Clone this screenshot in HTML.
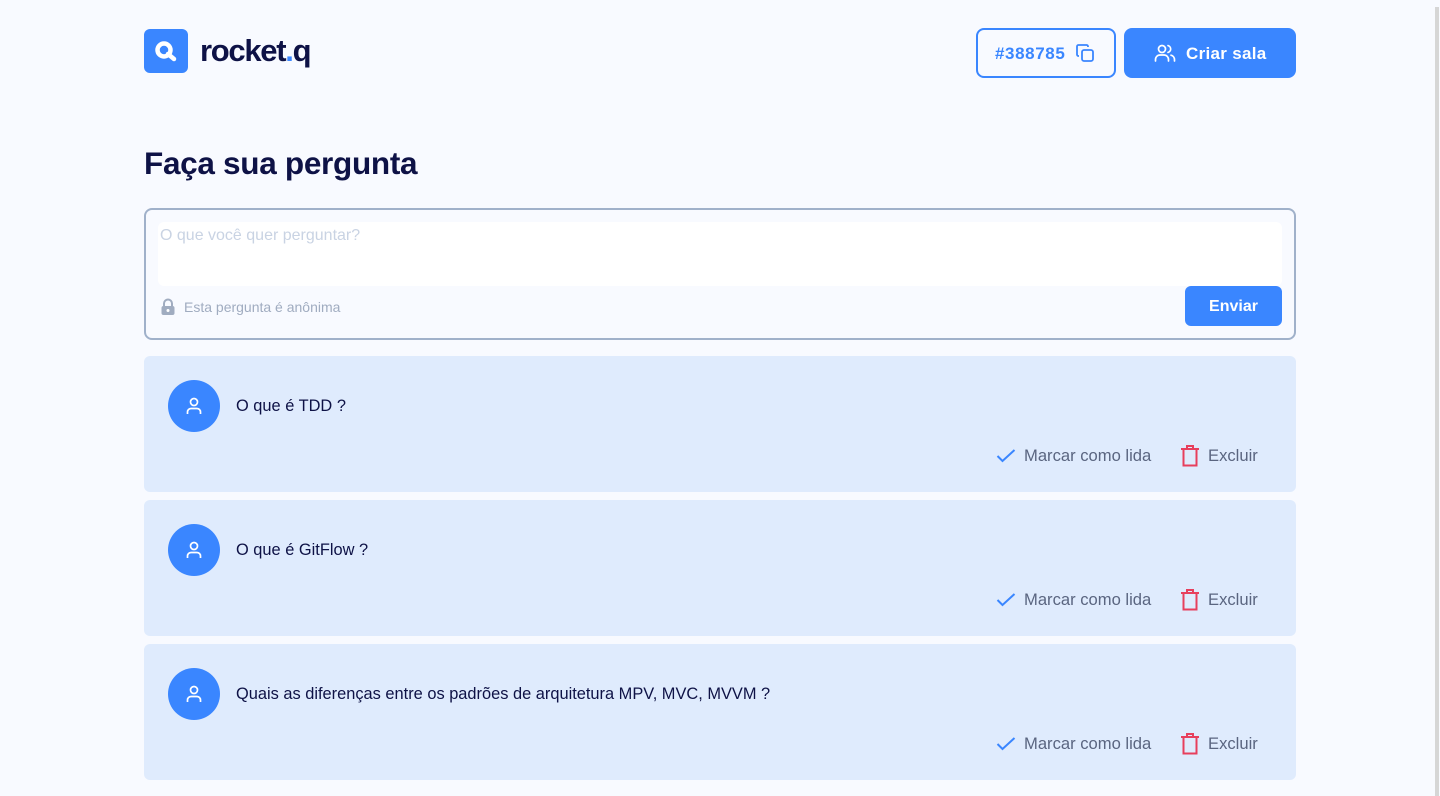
<!DOCTYPE html>
<html><head><meta charset="utf-8"><style>
*{box-sizing:border-box;margin:0;padding:0}
body{width:1440px;height:796px;overflow:hidden;background:#F8FAFF;font-family:"Liberation Sans",sans-serif;position:relative}
.sb{position:absolute;left:1435px;top:7px;width:4px;height:789px;background:#d6d6d6}
.logo{position:absolute;left:144px;top:29px;width:44px;height:44px;border-radius:6px;background:#3A86FF}
.brand{position:absolute;left:200px;top:33px;font-size:31px;font-weight:bold;color:#0E1246;letter-spacing:-1.3px}
.brand span{color:#3A86FF}
.code{position:absolute;left:976px;top:28px;width:140px;height:50px;border:2px solid #3A86FF;border-radius:8px;color:#3A86FF;font-size:17px;font-weight:bold;letter-spacing:0.6px;display:flex;align-items:center;padding-left:17px;padding-top:2px}
.criar{position:absolute;left:1124px;top:28px;width:172px;height:50px;border-radius:8px;background:#3A86FF;color:#fff;font-size:17px;font-weight:bold;letter-spacing:0.3px;display:flex;align-items:center;padding-left:30px;padding-top:2px}
h1{position:absolute;left:144px;top:145px;font-size:31.5px;color:#0E1246;letter-spacing:-0.3px}
.form{position:absolute;left:144px;top:208px;width:1152px;height:132px;border:2px solid #A0B1CA;border-radius:8px}
.ta{position:absolute;left:12px;top:12px;width:1124px;height:64px;background:#fff;border-radius:6px;color:#C9D3E3;font-size:16px;padding:5px 2px}
.anon{position:absolute;left:14px;top:88px;color:#A0ACC0;font-size:14px;display:flex;align-items:center;gap:8px}
.env{position:absolute;left:1039px;top:76px;width:97px;height:40px;background:#3A86FF;border-radius:6px;color:#fff;font-size:16px;font-weight:bold;text-align:center;line-height:42px}
.q{position:absolute;left:144px;width:1152px;height:136px;background:#DFEBFD;border-radius:6px}
.av{position:absolute;left:24px;top:24px;width:52px;height:52px;border-radius:50%;background:#3A86FF;display:flex;align-items:center;justify-content:center}
.qt{position:absolute;left:92px;top:41px;font-size:16.4px;color:#0E1246}
.act{position:absolute;top:90px;font-size:16.6px;color:#5A6580;display:flex;align-items:center;gap:8px}
.act svg{flex:none}
.m{left:852px}.x{left:1036px;top:88px}
</style></head><body>
<div class="sb"></div>
<div class="logo"><svg width="44" height="44" viewBox="0 0 44 44"><circle cx="20" cy="21" r="6.5" fill="none" stroke="#fff" stroke-width="4.5"/><path d="M24 25 L30 30" stroke="#fff" stroke-width="4.5" stroke-linecap="round"/></svg></div>
<div class="brand">rocket<span>.</span>q</div>
<div class="code">#388785<svg style="margin-left:10px;margin-top:-2px" width="20" height="20" viewBox="0 0 20 20" fill="none" stroke="#3A86FF" stroke-width="1.8"><rect x="7" y="7" width="11" height="11" rx="2"/><path d="M4 13H3.5A1.5 1.5 0 0 1 2 11.5V3.5A1.5 1.5 0 0 1 3.5 2h8A1.5 1.5 0 0 1 13 3.5V4"/></svg></div>
<div class="criar"><svg style="margin-top:-2px" width="22" height="20" viewBox="0 0 22 20" fill="none" stroke="#fff" stroke-width="1.7" stroke-linecap="round"><circle cx="8" cy="6" r="3.5"/><path d="M1.5 18v-1.5a4.5 4.5 0 0 1 4.5-4.5h4a4.5 4.5 0 0 1 4.5 4.5V18"/><path d="M14 2.6a3.5 3.5 0 0 1 0 6.8M17 12.2a4.5 4.5 0 0 1 3.5 4.3V18"/></svg><span style="margin-left:10px">Criar sala</span></div>
<h1>Faça sua pergunta</h1>
<div class="form"><div class="ta">O que você quer perguntar?</div>
<div class="anon"><svg width="16" height="18" viewBox="0 0 16 18"><path d="M4 8V5.5a4 4 0 0 1 8 0V8" fill="none" stroke="#A0ACC0" stroke-width="2"/><rect x="1.5" y="8" width="13" height="9" rx="2" fill="#A0ACC0"/><circle cx="8" cy="12.5" r="1.5" fill="#fff"/></svg>Esta pergunta é anônima</div>
<div class="env">Enviar</div></div>
<div class="q" style="top:356px"><div class="av"><svg width="20" height="20" viewBox="0 0 20 20" fill="none" stroke="#fff" stroke-width="1.7"><circle cx="10" cy="6" r="3.5"/><path d="M3.5 18v-2a3.5 3.5 0 0 1 3.5-3.5h6a3.5 3.5 0 0 1 3.5 3.5v2"/></svg></div><div class="qt">O que é TDD ?</div>
<div class="act m"><svg width="20" height="16" viewBox="0 0 20 16" fill="none" stroke="#3A86FF" stroke-width="2"><path d="M1.5 8l5 5L18.5 2"/></svg>Marcar como lida</div>
<div class="act x"><svg width="20" height="24" viewBox="0 0 20 24" fill="none" stroke="#E73F5D" stroke-width="2"><path d="M1 5h18M7 5V2h6v3M3.5 5v16.5h13V5"/></svg>Excluir</div></div>
<div class="q" style="top:500px"><div class="av"><svg width="20" height="20" viewBox="0 0 20 20" fill="none" stroke="#fff" stroke-width="1.7"><circle cx="10" cy="6" r="3.5"/><path d="M3.5 18v-2a3.5 3.5 0 0 1 3.5-3.5h6a3.5 3.5 0 0 1 3.5 3.5v2"/></svg></div><div class="qt">O que é GitFlow ?</div>
<div class="act m"><svg width="20" height="16" viewBox="0 0 20 16" fill="none" stroke="#3A86FF" stroke-width="2"><path d="M1.5 8l5 5L18.5 2"/></svg>Marcar como lida</div>
<div class="act x"><svg width="20" height="24" viewBox="0 0 20 24" fill="none" stroke="#E73F5D" stroke-width="2"><path d="M1 5h18M7 5V2h6v3M3.5 5v16.5h13V5"/></svg>Excluir</div></div>
<div class="q" style="top:644px"><div class="av"><svg width="20" height="20" viewBox="0 0 20 20" fill="none" stroke="#fff" stroke-width="1.7"><circle cx="10" cy="6" r="3.5"/><path d="M3.5 18v-2a3.5 3.5 0 0 1 3.5-3.5h6a3.5 3.5 0 0 1 3.5 3.5v2"/></svg></div><div class="qt">Quais as diferenças entre os padrões de arquitetura MPV, MVC, MVVM ?</div>
<div class="act m"><svg width="20" height="16" viewBox="0 0 20 16" fill="none" stroke="#3A86FF" stroke-width="2"><path d="M1.5 8l5 5L18.5 2"/></svg>Marcar como lida</div>
<div class="act x"><svg width="20" height="24" viewBox="0 0 20 24" fill="none" stroke="#E73F5D" stroke-width="2"><path d="M1 5h18M7 5V2h6v3M3.5 5v16.5h13V5"/></svg>Excluir</div></div>
</body></html>
